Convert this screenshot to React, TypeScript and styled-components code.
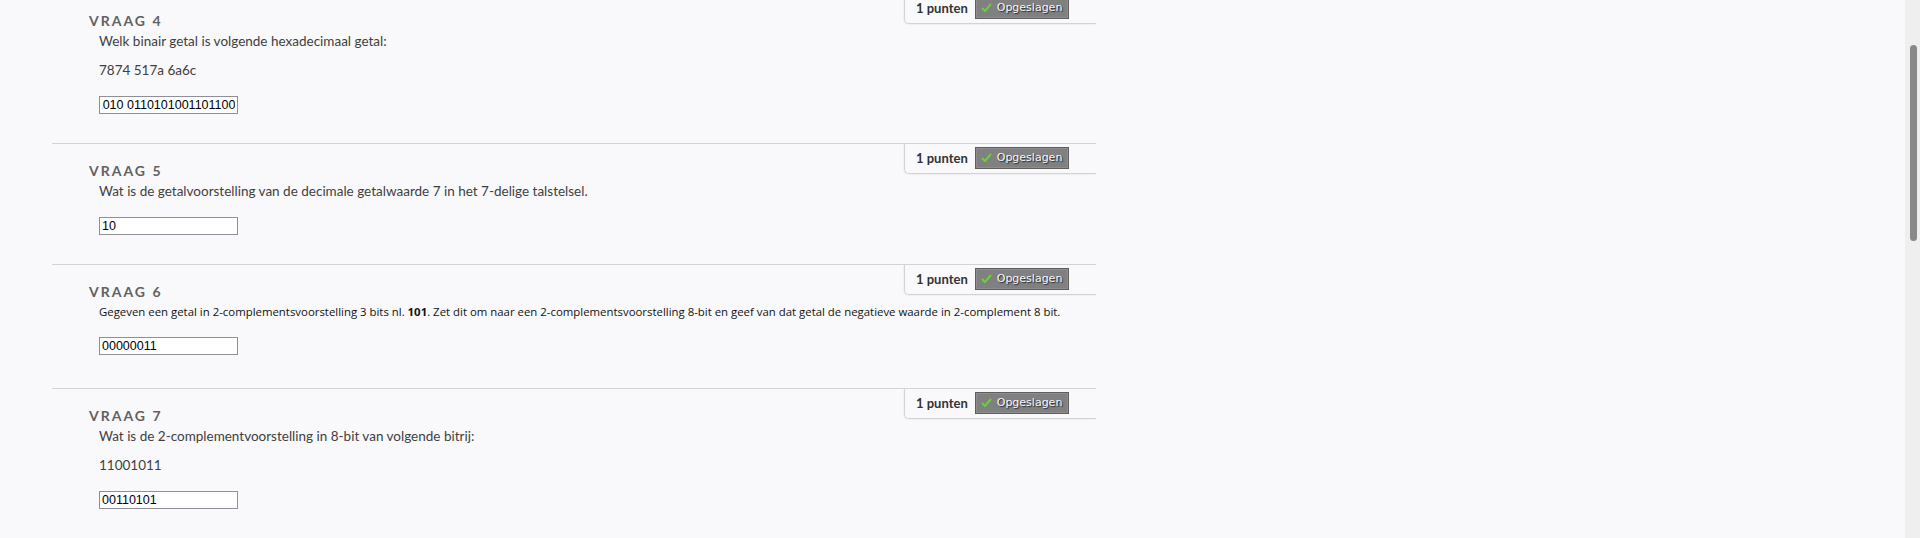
import { useEffect, useRef } from 'react'
import styled, { createGlobalStyle } from 'styled-components'

const GlobalStyle = createGlobalStyle`
  html, body {
    margin: 0;
    padding: 0;
    height: 100%;
    overflow: hidden;
    background: #f9f9fb;
  }
  #root {
    height: 100%;
  }
`

type Question = {
  nr: number
  text: React.ReactNode
  extra?: string
  answer: string
  small?: boolean
  scrollEnd?: boolean
}

const questions: Question[] = [
  {
    nr: 4,
    text: 'Welk binair getal is volgende hexadecimaal getal:',
    extra: '7874 517a 6a6c',
    answer: '0111100001110100 0101000101111010 0110101001101100',
    scrollEnd: true,
  },
  {
    nr: 5,
    text: 'Wat is de getalvoorstelling van de decimale getalwaarde 7 in het 7-delige talstelsel.',
    answer: '10',
  },
  {
    nr: 6,
    small: true,
    text: (
      <>
        Gegeven een getal in 2-complementsvoorstelling 3 bits nl. <b>101</b>. Zet dit om naar een
        2-complementsvoorstelling 8-bit en geef van dat getal de negatieve waarde in 2-complement 8 bit.
      </>
    ),
    answer: '00000011',
  },
  {
    nr: 7,
    text: 'Wat is de 2-complementvoorstelling in 8-bit van volgende bitrij:',
    extra: '11001011',
    answer: '00110101',
  },
]

function Check() {
  return (
    <svg width='11' height='9' viewBox='0 0 11 9'>
      <path d='M1 5 L4 8 L10 1' fill='none' stroke='#66d13a' strokeWidth='2' />
    </svg>
  )
}

function AnswerInput({ value, scrollEnd, small }: { value: string; scrollEnd?: boolean; small?: boolean }) {
  const ref = useRef<HTMLInputElement>(null)
  useEffect(() => {
    if (scrollEnd && ref.current) ref.current.scrollLeft = ref.current.scrollWidth
  }, [scrollEnd])
  return <Input ref={ref} defaultValue={value} $small={small} />
}

function App() {
  return (
    <Page>
      <GlobalStyle />
      <Main>
        <List>
          {questions.map(q => (
            <Block key={q.nr} $small={q.small}>
              <Points>
                <PointsLabel>1 punten</PointsLabel>
                <SavedButton>
                  <Check />
                  Opgeslagen
                </SavedButton>
              </Points>
              <Heading>Vraag {q.nr}</Heading>
              <Text $small={q.small}>{q.text}</Text>
              {q.extra && <Text>{q.extra}</Text>}
              <AnswerInput value={q.answer} scrollEnd={q.scrollEnd} small={q.small} />
            </Block>
          ))}
        </List>
      </Main>
      <ScrollTrack>
        <ScrollThumb />
      </ScrollTrack>
    </Page>
  )
}

const Page = styled.div`
  display: flex;
  height: 100vh;
  background: #f9f9fb;
`

const Main = styled.div`
  flex: 1;
  overflow: hidden;
`

const List = styled.div`
  margin-top: -7px;
  padding-left: 52px;
  width: 1044px;
`

const Block = styled.div<{ $small?: boolean }>`
  border-top: 1px solid #d3d3d6;
  padding: 0 0 ${p => (p.$small ? '33px' : '29px')} 37px;
  display: flow-root;
`

const Points = styled.div`
  float: right;
  width: 192px;
  height: 30px;
  box-sizing: border-box;
  display: flex;
  align-items: center;
  padding: 0 0 0 11px;
  border-left: 1px solid #d3d3d6;
  border-bottom: 1px solid #d3d3d6;
  border-bottom-left-radius: 5px;
  box-shadow: -1px 1px 1px rgba(0, 0, 0, 0.04);
`

const PointsLabel = styled.span`
  font-family: Lato, 'Liberation Sans', sans-serif;
  font-weight: 700;
  font-size: 13px;
  color: #333;
  margin-right: 7px;
  margin-top: -2px;
`

const SavedButton = styled.span`
  display: flex;
  align-items: center;
  gap: 5px;
  width: 94px;
  height: 22px;
  box-sizing: border-box;
  padding-left: 5px;
  margin-top: -2px;
  background: #808080;
  border: 1px solid #5e5e5e;
  box-shadow: inset 0 0 0 1px #8e8e8e;
  font-family: 'DejaVu Sans', Verdana, sans-serif;
  font-size: 11px;
  color: #f4f7ff;
  text-shadow: 1px 1px 1px #2a2a2a;
`

const Heading = styled.h3`
  margin: 17px 0 0;
  font-family: Lato, 'Liberation Sans', sans-serif;
  font-weight: 700;
  font-size: 14px;
  line-height: 20px;
  letter-spacing: 2px;
  text-transform: uppercase;
  color: #626262;
`

const Text = styled.p<{ $small?: boolean }>`
  margin: 0 0 0 10px;
  font-family: ${p => (p.$small ? "'Open Sans', Lato, sans-serif" : "Lato, 'Liberation Sans', sans-serif")};
  font-size: ${p => (p.$small ? '11.4px' : '13.5px')};
  line-height: 20px;
  color: ${p => (p.$small ? '#111' : '#404040')};

  & + & {
    margin-top: 9px;
  }
`

const Input = styled.input<{ $small?: boolean }>`
  display: block;
  margin: ${p => (p.$small ? '15px' : '16px')} 0 0 10px;
  width: 139px;
  height: 18px;
  box-sizing: border-box;
  padding: 0 2px;
  border: 1px solid #8f8f9a;
  border-radius: 0;
  background: #fff;
  font-family: 'Liberation Sans', Arial, sans-serif;
  font-size: 12.5px;
  color: #000;
  outline: none;
`

const ScrollTrack = styled.div`
  width: 15px;
  flex: none;
  background: #efefef;
  display: flex;
  justify-content: center;
  padding-top: 45px;
  box-sizing: border-box;
`

const ScrollThumb = styled.div`
  width: 7px;
  height: 196px;
  margin-left: 1px;
  border-radius: 4px;
  background: #898989;
`

export default App
